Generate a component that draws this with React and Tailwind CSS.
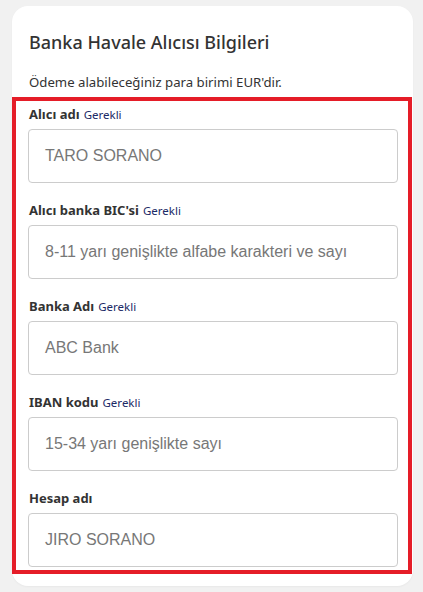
import React from "react";

const fields = [
  { label: "Alıcı adı", req: true, value: "TARO SORANO" },
  { label: "Alıcı banka BIC'si", req: true, value: "8-11 yarı genişlikte alfabe karakteri ve sayı" },
  { label: "Banka Adı", req: true, value: "ABC Bank" },
  { label: "IBAN kodu", req: true, value: "15-34 yarı genişlikte sayı" },
  { label: "Hesap adı", req: false, value: "JIRO SORANO" },
];

export default function App() {
  return (
    <div className="min-h-screen bg-[#f1f1f1] pt-[6px] pl-[12px] pr-[10px] font-['Noto_Sans',sans-serif]">
      <div className="bg-white rounded-[16px] pb-[12px] shadow-[0_1px_2px_rgba(0,0,0,0.04)]">
        <div className="pt-[24px] pl-[17px]">
          <h2 className="text-[18px] leading-[24px] font-medium text-[#333]">Banka Havale Alıcısı Bilgileri</h2>
          <p className="mt-[18px] text-[13.2px] leading-[20px] text-[#333]">Ödeme alabileceğiniz para birimi EUR'dir.</p>
        </div>
        <div className="mt-[5px] mr-[1px] border-4 border-[#e51d28] pt-[4px] pb-[3px] pl-[12px] pr-[10px]">
          {fields.map((f, i) => (
            <div key={i} className={i > 0 ? "mt-[18px]" : ""}>
              <div className="h-[20px] flex items-center pl-[1px]">
                <span className="text-[13px] font-bold text-[#333]">{f.label}</span>
                {f.req && <span className="ml-[4px] text-[11.5px] text-[#1b2a66]">Gerekli</span>}
              </div>
              <div className="mt-[4px] h-[54px] border border-[#cccccc] rounded-[4px] flex items-center pl-[16px] font-['Liberation_Sans',Arial,sans-serif] text-[16px] text-[#777]">
                {f.value}
              </div>
            </div>
          ))}
        </div>
      </div>
    </div>
  );
}
